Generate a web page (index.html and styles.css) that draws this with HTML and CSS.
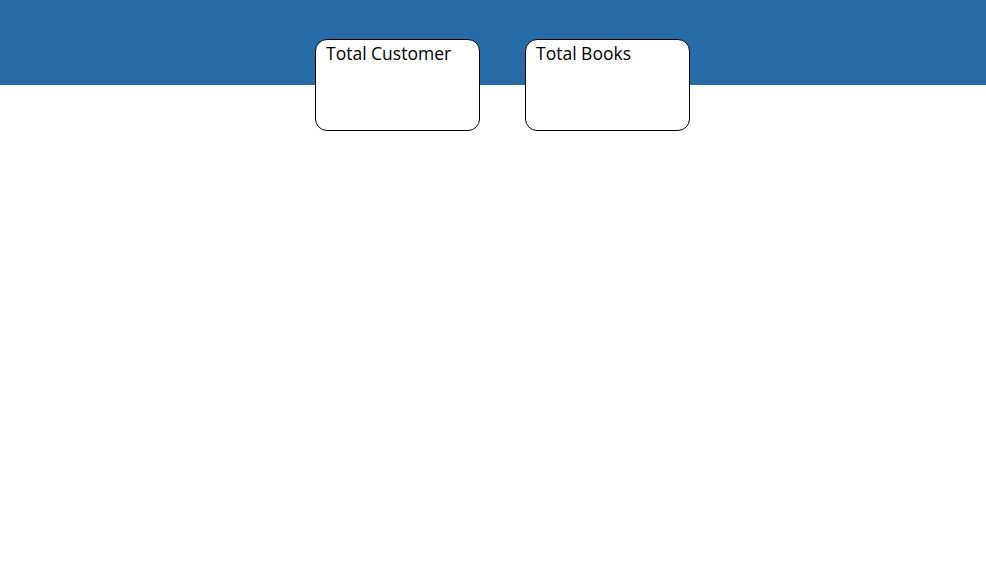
FILE: index.html
```html
<!DOCTYPE html>
<html>
<head>
<meta charset="utf-8">
<link rel="stylesheet" href="styles.css">
</head>
<body>
<header class="top"></header>
<main class="cards">
  <div class="card"><span class="card-title">Total Customer</span></div>
  <div class="card"><span class="card-title">Total Books</span></div>
</main>
</body>
</html>
```
FILE: styles.css
```css
html, body {
  margin: 0;
  padding: 0;
  background: #ffffff;
  font-family: "Open Sans", "Liberation Sans", sans-serif;
}
.top {
  height: 85px;
  background: #266ca9;
}
.cards {
  display: flex;
  gap: 45px;
  padding-left: 315px;
  margin-top: -46px;
}
.card {
  box-sizing: border-box;
  width: 165px;
  height: 92px;
  background: #ffffff;
  border: 1px solid #000000;
  border-radius: 12px;
  padding: 1px 10px;
}
.card-title {
  font-size: 17.5px;
  color: #000000;
  line-height: 24px;
}
```
